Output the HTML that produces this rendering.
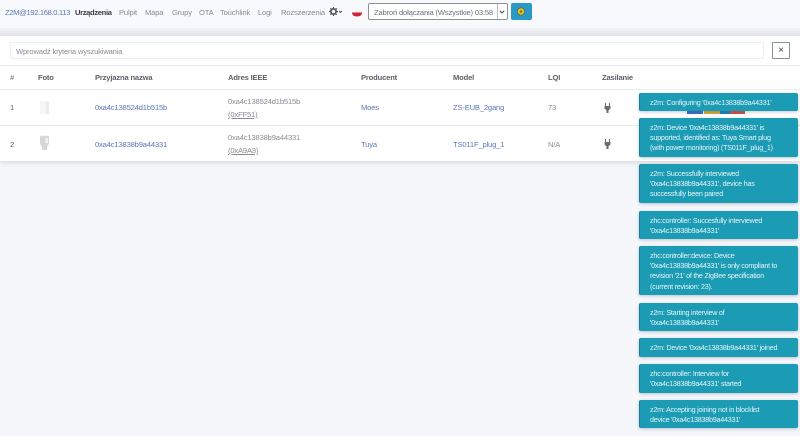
<!DOCTYPE html>
<html lang="pl">
<head>
<meta charset="utf-8">
<title>Zigbee2MQTT</title>
<style>
html,body{margin:0;padding:0;width:800px;height:436px;overflow:hidden;background:#f5f7fb;font-family:"Liberation Sans",sans-serif;font-size:7.6px;letter-spacing:-.17px;color:#5a5c69}
.a{position:absolute;white-space:nowrap;line-height:11px}
#nav{position:absolute;left:0;top:0;width:800px;height:28px;background:#f8f9fc}
#navs{position:absolute;left:0;top:28px;width:800px;height:8px;background:linear-gradient(#f1f2f7,#e3e5ec)}
#card{position:absolute;left:0;top:36px;width:800px;height:125px;background:#fff;box-shadow:0 2px 5px rgba(58,59,69,.15)}
#search{position:absolute;left:10px;top:42px;width:752px;height:15px;border:1px solid #eceef3;border-radius:2px;background:#fff}
#x{position:absolute;left:772px;top:42px;width:16px;height:15px;border:1px solid #8f9199;border-radius:1px;background:#fff;color:#444;font-size:10px;line-height:15px;text-align:center}
.hl{position:absolute;left:0;width:800px;height:1px;background:#e9ebf1}
.b{color:#5f6168;font-weight:bold}
.l{color:#5a78b8}
.g{color:#8a8c94}
.k{color:#5a5c69}
.u{text-decoration:underline}
.t{position:absolute;left:639px;width:158px;background:#1b9bb4;border-left:1px solid #157f94;border-radius:2px;box-shadow:0 1px 3px rgba(60,70,90,.3);color:#e6f5f8;font-size:7.2px;letter-spacing:-.24px;line-height:10.35px}
.t div{position:absolute;left:10px;top:4.5px;white-space:nowrap}
.bar{position:absolute;top:111px;height:3px}
</style>
</head>
<body>
<div id="nav"></div>
<div id="navs"></div>
<div class="a l" style="left:5px;top:6.5px;letter-spacing:-.35px">Z2M@192.168.0.113</div>
<div class="a" style="left:75px;top:6.5px;color:#3a3b45;font-weight:bold;letter-spacing:-.35px">Urządzenia</div>
<div class="a g" style="left:119px;top:6.5px">Pulpit</div>
<div class="a g" style="left:145px;top:6.5px">Mapa</div>
<div class="a g" style="left:172px;top:6.5px">Grupy</div>
<div class="a g" style="left:199px;top:6.5px">OTA</div>
<div class="a g" style="left:220px;top:6.5px">Touchlink</div>
<div class="a g" style="left:258px;top:6.5px">Logi</div>
<div class="a g" style="left:281px;top:6.5px">Rozszerzenia</div>
<svg class="a" style="left:329px;top:7px" width="14" height="9" viewBox="0 0 14 9"><circle cx="4.5" cy="4.5" r="2.6" fill="none" stroke="#55565f" stroke-width="1.7"/><path d="M4.5 0V2M4.5 7V9M0 4.5H2M7 4.5H9M1.3 1.3L2.7 2.7M6.3 6.3L7.7 7.7M7.7 1.3L6.3 2.7M2.7 6.3L1.3 7.7" stroke="#55565f" stroke-width="1.2"/><path d="M10 4L11.5 5.5L13 4" fill="none" stroke="#55565f" stroke-width="1"/></svg>
<svg class="a" style="left:352px;top:9px" width="10" height="8" viewBox="0 0 10 8"><path d="M0 3.5H10C10 6 8 7.5 5 7.5S0 6 0 3.5Z" fill="#d22136"/><path d="M0 3.5C0 1 2 0 5 0S10 1 10 3.5Z" fill="#f5f5f7"/></svg>
<div style="position:absolute;left:368px;top:3px;width:138px;height:15px;border:1px solid #8f9199;border-radius:2px;background:#fff"></div>
<div style="position:absolute;left:497px;top:4px;width:1px;height:15px;background:#b9bbc2"></div>
<div class="a" style="left:374px;top:6.5px;color:#6e7078">Zabroń dołączania (Wszystkie) 03:58</div>
<svg class="a" style="left:499px;top:10px" width="6" height="4" viewBox="0 0 6 4"><path d="M.8 .8L3 3L5.2 .8" fill="none" stroke="#555" stroke-width="1.1"/></svg>
<div style="position:absolute;left:511px;top:3px;width:21px;height:17px;background:#2a99c6;border-radius:2px"></div>
<svg class="a" style="left:516px;top:7px" width="10" height="9" viewBox="0 0 10 9"><circle cx="5" cy="4.5" r="3.6" fill="#e2c52c" stroke="#5d6a3a" stroke-width=".8"/><circle cx="5" cy="4.5" r="1.2" fill="#6a6a30"/></svg>

<div id="card"></div>
<div id="search"></div>
<div class="a" style="left:16px;top:45.5px;color:#8b8d95">Wprowadź kryteria wyszukiwania</div>
<div id="x">×</div>

<div class="hl" style="top:65px"></div>
<div class="hl" style="top:89px"></div>
<div class="hl" style="top:125px"></div>

<div class="a b" style="left:10px;top:72px;color:#888">#</div>
<div class="a b" style="left:38px;top:72px">Foto</div>
<div class="a b" style="left:95px;top:72px">Przyjazna nazwa</div>
<div class="a b" style="left:228px;top:72px">Adres IEEE</div>
<div class="a b" style="left:361px;top:72px">Producent</div>
<div class="a b" style="left:453px;top:72px">Model</div>
<div class="a b" style="left:548px;top:72px">LQI</div>
<div class="a b" style="left:602px;top:72px">Zasilanie</div>

<div class="a k" style="left:10px;top:102px">1</div>
<svg class="a" style="left:39px;top:100px" width="12" height="16" viewBox="0 0 12 16"><rect x="1" y="1" width="9" height="13" fill="#f5f6f7"/><rect x="7" y="1" width="3" height="13" fill="#ebecee"/></svg>
<div class="a l" style="left:95px;top:102px">0xa4c138524d1b515b</div>
<div class="a g" style="left:228px;top:96px">0xa4c138524d1b515b</div>
<div class="a g u" style="left:228px;top:109px">(0xFF51)</div>
<div class="a l" style="left:361px;top:102px">Moes</div>
<div class="a l" style="left:453px;top:102px">ZS-EUB_2gang</div>
<div class="a g" style="left:548px;top:102px">73</div>
<svg class="a" style="left:604px;top:103px" width="7" height="10" viewBox="0 0 7 10"><path d="M1.5 0V3M5.5 0V3" stroke="#6b6d75" stroke-width="1"/><path d="M.5 3H6.5V5.5L4.5 7.5V10H2.5V7.5L.5 5.5Z" fill="#6b6d75"/></svg>

<div class="a k" style="left:10px;top:139px">2</div>
<svg class="a" style="left:39px;top:135px" width="11" height="16" viewBox="0 0 11 16"><path d="M1 2C1 1 2 .8 5.5 .8S10 1 10 2V8C10 10 8.5 10.5 8 11.5V15H3V11.5C2.5 10.5 1 10 1 8Z" fill="#d4d6d8"/><path d="M6.5 3H9V8H6.5Z" fill="#f0f1f2"/></svg>
<div class="a l" style="left:95px;top:139px">0xa4c13838b9a44331</div>
<div class="a g" style="left:228px;top:132px">0xa4c13838b9a44331</div>
<div class="a g u" style="left:228px;top:145px">(0xA9A3)</div>
<div class="a l" style="left:361px;top:139px">Tuya</div>
<div class="a l" style="left:453px;top:139px">TS011F_plug_1</div>
<div class="a g" style="left:548px;top:139px">N/A</div>
<svg class="a" style="left:604px;top:139px" width="7" height="10" viewBox="0 0 7 10"><path d="M1.5 0V3M5.5 0V3" stroke="#6b6d75" stroke-width="1"/><path d="M.5 3H6.5V5.5L4.5 7.5V10H2.5V7.5L.5 5.5Z" fill="#6b6d75"/></svg>

<div class="bar" style="left:687px;width:16px;background:#3a6fc0"></div>
<div class="bar" style="left:704px;width:16px;background:#dba63c"></div>
<div class="bar" style="left:720px;width:10px;background:#1f7fb8"></div>
<div class="bar" style="left:730px;width:15px;background:#d0504a"></div>

<div class="t" style="top:93px;height:18px"><div>z2m: Configuring '0xa4c13838b9a44331'</div></div>
<div class="t" style="top:118px;height:39px"><div>z2m: Device '0xa4c13838b9a44331' is<br>supported, identified as: Tuya Smart plug<br>(with power monitoring) (TS011F_plug_1)</div></div>
<div class="t" style="top:164px;height:39px"><div>z2m: Successfully interviewed<br>'0xa4c13838b9a44331', device has<br>successfully been paired</div></div>
<div class="t" style="top:211px;height:28px"><div>zhc:controller: Succesfully interviewed<br>'0xa4c13838b9a44331'</div></div>
<div class="t" style="top:246px;height:49px"><div>zhc:controller:device: Device<br>'0xa4c13838b9a44331' is only compliant to<br>revision '21' of the ZigBee specification<br>(current revision: 23).</div></div>
<div class="t" style="top:303px;height:28px"><div>z2m: Starting interview of<br>'0xa4c13838b9a44331'</div></div>
<div class="t" style="top:338px;height:19px"><div>z2m: Device '0xa4c13838b9a44331' joined</div></div>
<div class="t" style="top:364px;height:29px"><div>zhc:controller: Interview for<br>'0xa4c13838b9a44331' started</div></div>
<div class="t" style="top:400px;height:28px"><div>z2m: Accepting joining not in blocklist<br>device '0xa4c13838b9a44331'</div></div>
</body>
</html>
